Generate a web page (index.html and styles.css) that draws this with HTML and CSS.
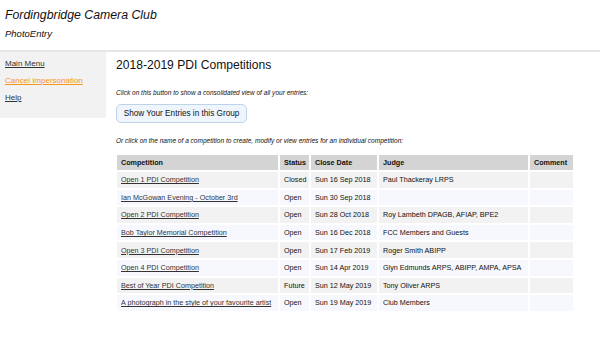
FILE: index.html
```html
<!DOCTYPE html>
<html lang="en">

<head>
	<meta charset="UTF-8">
	<meta name="viewport" content="width=device-width, initial-scale=1.0">
	<title>PhotoEntry</title>
	<link rel="stylesheet" href="styles.css">
</head>

<body>
	<div class="header">
		<h1>Fordingbridge Camera Club</h1>
		<div class="app-name">PhotoEntry</div>
	</div>

	<div class="page">
		<ul class="sidebar">
			<li><a href="#">Main Menu</a></li>
			<li><a href="#" class="orange">Cancel Impersonation</a></li>
			<li><a href="#">Help</a></li>
		</ul>

		<div class="main">
			<h2>2018-2019 PDI Competitions</h2>
			<p class="note">Click on this button to show a consolidated view of all your entries:</p>
			<button class="entries-btn">Show Your Entries in this Group</button>
			<p class="note">Or click on the name of a competition to create, modify or view entries for an individual competition:</p>

			<table class="comps">
				<colgroup>
					<col class="c-name">
					<col class="c-status">
					<col class="c-date">
					<col class="c-judge">
					<col class="c-comment">
				</colgroup>
				<thead>
					<tr>
						<th>Competition</th>
						<th>Status</th>
						<th>Close Date</th>
						<th>Judge</th>
						<th>Comment</th>
					</tr>
				</thead>
				<tbody>
					<tr>
						<td><a href="#">Open 1 PDI Competition</a></td>
						<td>Closed</td>
						<td>Sun 16 Sep 2018</td>
						<td>Paul Thackeray LRPS</td>
						<td></td>
					</tr>
					<tr>
						<td><a href="#">Ian McGowan Evening - October 3rd</a></td>
						<td>Open</td>
						<td>Sun 30 Sep 2018</td>
						<td></td>
						<td></td>
					</tr>
					<tr>
						<td><a href="#">Open 2 PDI Competition</a></td>
						<td>Open</td>
						<td>Sun 28 Oct 2018</td>
						<td>Roy Lambeth DPAGB, AFIAP, BPE2</td>
						<td></td>
					</tr>
					<tr>
						<td><a href="#">Bob Taylor Memorial Competition</a></td>
						<td>Open</td>
						<td>Sun 16 Dec 2018</td>
						<td>FCC Members and Guests</td>
						<td></td>
					</tr>
					<tr>
						<td><a href="#">Open 3 PDI Competition</a></td>
						<td>Open</td>
						<td>Sun 17 Feb 2019</td>
						<td>Roger Smith ABIPP</td>
						<td></td>
					</tr>
					<tr>
						<td><a href="#">Open 4 PDI Competition</a></td>
						<td>Open</td>
						<td>Sun 14 Apr 2019</td>
						<td>Glyn Edmunds ARPS, ABIPP, AMPA, APSA</td>
						<td></td>
					</tr>
					<tr>
						<td><a href="#">Best of Year PDI Competition</a></td>
						<td>Future</td>
						<td>Sun 12 May 2019</td>
						<td>Tony Oliver ARPS</td>
						<td></td>
					</tr>
					<tr>
						<td><a href="#">A photograph in the style of your favourite artist</a></td>
						<td>Open</td>
						<td>Sun 19 May 2019</td>
						<td>Club Members</td>
						<td></td>
					</tr>
				</tbody>
			</table>
		</div>
	</div>
</body>

</html>
```

FILE: styles.css
```css
* {
	box-sizing: border-box;
}

body {
	margin: 0;
	font-family: "Liberation Sans", Arial, sans-serif;
	color: #111;
	background-color: #fff;
}

a {
	color: #333;
}

.header {
	padding: 7px 5px 0;
	height: 52px;
	border-bottom: 2px solid #e6e6e6;
}

.header h1 {
	font-size: 12.3px;
	font-style: italic;
	font-weight: normal;
	margin: 0;
	line-height: 16px;
}

.app-name {
	font-size: 9.5px;
	font-style: italic;
	margin-top: 5px;
}

.page {
	display: flex;
	align-items: flex-start;
}

.sidebar {
	list-style-type: none;
	margin: 0;
	padding: 3px 5px 12px;
	width: 106px;
	background-color: #f2f2f2;
	font-size: 8px;
}

.sidebar li {
	line-height: 17px;
}

.sidebar a.orange {
	color: #f7941d;
}

.main {
	padding-left: 10px;
	flex: 1;
}

h2 {
	font-size: 12.1px;
	font-weight: normal;
	margin: 5px 0 0;
	line-height: 16px;
}

.note {
	font-size: 6.55px;
	font-style: italic;
	margin: 16px 0 6px;
}

.entries-btn {
	font-family: inherit;
	font-size: 8.2px;
	color: #111;
	background-color: #eef5fd;
	border: 1px solid #bfd3e8;
	border-radius: 5px;
	padding: 0 6px;
	height: 19px;
	width: 131px;
}

.entries-btn + .note {
	margin-top: 14px;
}

.comps {
	border-spacing: 2px;
	margin: 9px 0 0 -1px;
	font-size: 7.2px;
	width: 460px;
	table-layout: fixed;
}

.comps .c-name {
	width: 161px;
}

.comps .c-status {
	width: 29px;
}

.comps .c-date {
	width: 66px;
}

.comps .c-judge {
	width: 149px;
}

.comps .c-comment {
	width: 43px;
}

.comps th {
	background-color: #d4d4d4;
	text-align: left;
	height: 15px;
	padding: 0 4px;
	white-space: nowrap;
}

.comps td {
	height: 15.6px;
	padding: 0 4px;
	white-space: nowrap;
}

.comps tbody tr:nth-child(odd) td {
	background-color: #f2f2f2;
}

.comps tbody tr:nth-child(even) td {
	background-color: #f7f8fe;
}
```
